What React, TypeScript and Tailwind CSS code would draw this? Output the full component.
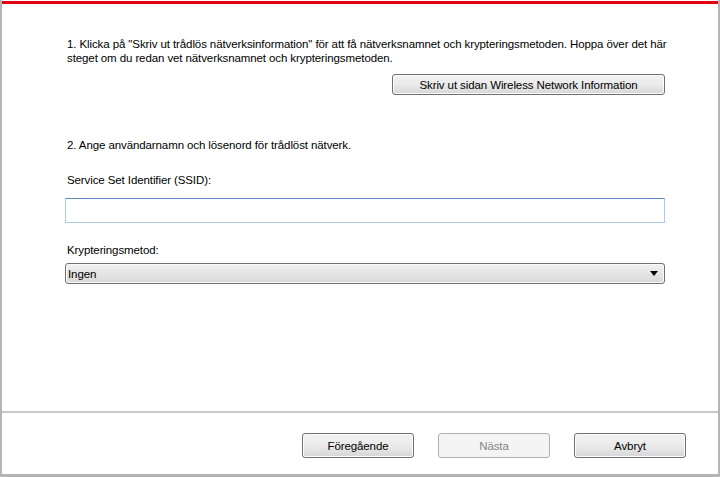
import React from "react";

const font = { fontFamily: '"Liberation Sans", Arial, sans-serif' };

function WinButton({ children, className = "" }: { children: React.ReactNode; className?: string }) {
  return (
    <div
      className={`flex items-center justify-center rounded-[3px] border border-[#707070] bg-gradient-to-b from-[#f2f2f2] via-[#ebebeb] to-[#d6d6d6] text-black shadow-[inset_0_0_0_1px_#fcfcfc] ${className}`}
    >
      {children}
    </div>
  );
}

export default function App() {
  return (
    <div
      className="w-[720px] h-[477px] bg-white flex flex-col border-l-2 border-r-2 border-b-[3px] border-[#b4b4b4] text-[11.5px] tracking-[-0.1px] leading-[14px] text-black"
      style={font}
    >
      <div className="mt-[1px] h-[3px] bg-[#e50016]" />
      <div className="flex flex-col pl-[63px] pr-[53px] pt-[33px]">
        <p className="pl-[2px] whitespace-nowrap">
          1. Klicka på "Skriv ut trådlös nätverksinformation" för att få nätverksnamnet och krypteringsmetoden. Hoppa över det här
          <br />
          steget om du redan vet nätverksnamnet och krypteringsmetoden.
        </p>
        <div className="flex justify-end mt-[9px]">
          <WinButton className="w-[273px] h-[21px]">Skriv ut sidan Wireless Network Information</WinButton>
        </div>
        <p className="pl-[2px] mt-[43px]">2. Ange användarnamn och lösenord för trådlöst nätverk.</p>
        <p className="pl-[2px] mt-[21px]">Service Set Identifier (SSID):</p>
        <div className="mt-[11px] h-[25px] border border-[#a9cbe6] border-t-[#5a8dc1] bg-white" />
        <p className="pl-[2px] mt-[20px]">Krypteringsmetod:</p>
        <div className="mt-[6px] h-[21px] rounded-[3px] border border-[#707070] bg-gradient-to-b from-[#f2f2f2] to-[#d8d8d8] flex items-center justify-between pl-[2px] pr-[6px] shadow-[inset_0_0_0_1px_#fafafa]">
          <span>Ingen</span>
          <svg width="8" height="5" viewBox="0 0 8 5">
            <path d="M0 0H8L4 5Z" fill="#000" />
          </svg>
        </div>
      </div>
      <div className="flex-1" />
      <div className="h-[63px] border-t-2 border-[#c8c8c8] flex items-start justify-end pt-[20px] pr-[32px] gap-[24px]">
        <WinButton className="w-[112px] h-[25px]">Föregående</WinButton>
        <div className="w-[112px] h-[25px] flex items-center justify-center rounded-[3px] border border-[#adb2b5] bg-[#f4f4f4] text-[#838383]">
          Nästa
        </div>
        <WinButton className="w-[112px] h-[25px]">Avbryt</WinButton>
      </div>
    </div>
  );
}
